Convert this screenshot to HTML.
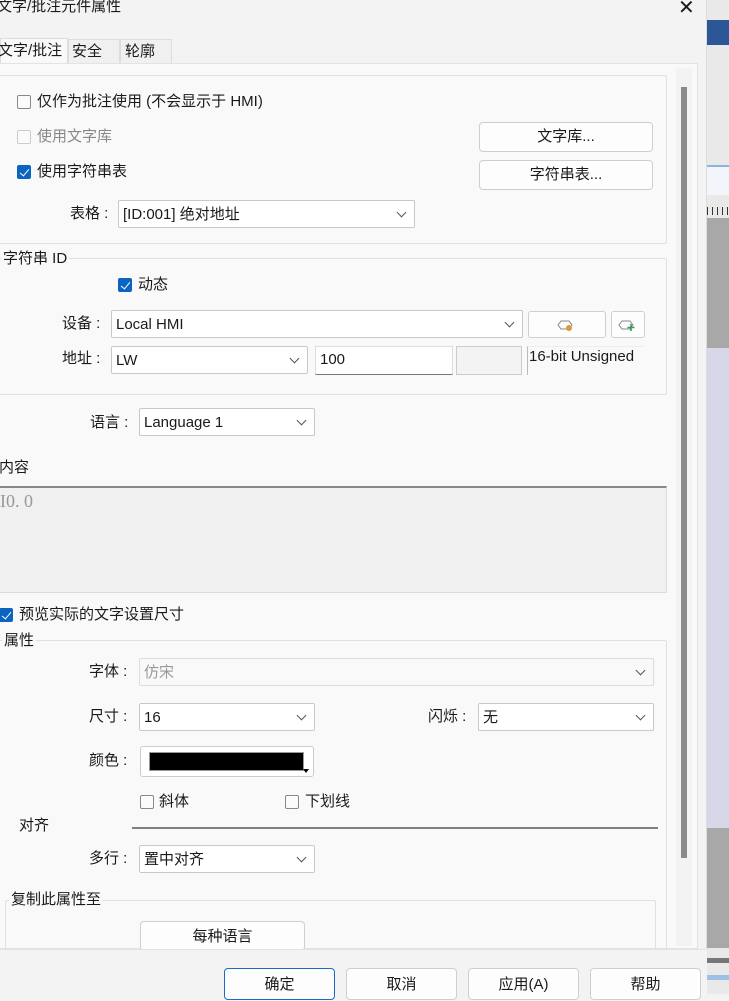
<!DOCTYPE html>
<html><head><meta charset="utf-8"><style>
*{box-sizing:border-box;margin:0;padding:0}
body{width:729px;height:994px;overflow:hidden;background:#f3f3f3;position:relative;font-family:"Liberation Sans","Noto Sans CJK SC",sans-serif;font-size:15px;color:#1a1a1a}
.a{position:absolute}
.t{position:absolute;white-space:nowrap;line-height:18px}
.sel{position:absolute;background:#fff;border:1px solid #c8c8c8;border-radius:2px;padding-left:4px;line-height:27px;font-size:15px}
.sel:after{content:"";position:absolute;right:9px;top:8px;width:6px;height:6px;border-right:1px solid #555;border-bottom:1px solid #555;transform:rotate(45deg)}
.btn{position:absolute;background:#fdfdfd;border:1px solid #cfcfcf;border-radius:4px;text-align:center;font-size:15px}
.cb{position:absolute;width:14px;height:14px;border:1px solid #888;border-radius:2px;background:#fbfbfb}
.cb.on{background:#0a64c0;border-color:#0a64c0}
.cb.on:after{content:"";position:absolute;left:4px;top:1px;width:4px;height:8px;border-right:1.5px solid #fff;border-bottom:1.5px solid #fff;transform:rotate(40deg)}
.grp{position:absolute;border:1px solid #e0e0e0;border-radius:2px}
.lbl{position:absolute;background:#f9f9f9;padding:0 2px;white-space:nowrap;line-height:18px}
</style></head><body>
<div class="a" style="left:707px;top:0;width:22px;height:994px;background:#e9e9e9"></div>
<div class="a" style="left:707px;top:20px;width:22px;height:25px;background:#2b5797"></div>
<div class="a" style="left:707px;top:165px;width:22px;height:2px;background:#8ab4e0"></div>
<div class="a" style="left:707px;top:167px;width:22px;height:28px;background:#f2f5fa"></div>
<div class="a" style="left:707px;top:207px;width:22px;height:8px;background:repeating-linear-gradient(90deg,#333 0 1px,transparent 1px 5px)"></div>
<div class="a" style="left:707px;top:218px;width:22px;height:130px;background:#a8a8a8"></div>
<div class="a" style="left:707px;top:348px;width:22px;height:480px;background:#d7d7ea"></div>
<div class="a" style="left:707px;top:828px;width:22px;height:120px;background:#a8a8a8"></div>
<div class="a" style="left:707px;top:958px;width:22px;height:5px;background:#777"></div>
<div class="a" style="left:707px;top:975px;width:22px;height:5px;background:#9cc0e8"></div>
<div class="a" style="left:0;top:0;width:707px;height:994px;background:#f3f3f3;border-right:1px solid #ddd"></div>
<div class="t" style="left:-3px;top:-2px;font-size:15px">文字/批注元件属性</div>
<div class="t" style="left:678px;top:-1px;font-size:20px;font-weight:300">✕</div>
<div class="a" style="left:0;top:38px;width:68px;height:26px;background:#f9f9f9;border:1px solid #ddd;border-bottom:none"></div>
<div class="a" style="left:68px;top:39px;width:52px;height:24px;background:#f0f0f0;border:1px solid #ddd;border-bottom:none"></div>
<div class="a" style="left:120px;top:39px;width:52px;height:24px;background:#f0f0f0;border:1px solid #ddd;border-bottom:none"></div>
<div class="t" style="left:-2px;top:42px">文字/批注</div>
<div class="t" style="left:72px;top:43px">安全</div>
<div class="t" style="left:125px;top:43px">轮廓</div>
<div class="a" style="left:0;top:63px;width:698px;height:886px;background:#f9f9f9;border:1px solid #e3e3e3;border-left:none"></div>
<div class="a" style="left:676px;top:68px;width:16px;height:878px;background:#f3f3f3"></div>
<div class="a" style="left:681px;top:87px;width:6px;height:771px;background:#8a8a8a"></div>
<div class="grp" style="left:-2px;top:75px;width:669px;height:169px"></div>
<div class="cb" style="left:17px;top:95px"></div><div class="t" style="left:37px;top:93px">仅作为批注使用 (不会显示于 HMI)</div>
<div class="cb" style="left:17px;top:130px;border-color:#ccc"></div><div class="t" style="left:37px;top:128px;color:#888">使用文字库</div>
<div class="cb on" style="left:17px;top:165px"></div><div class="t" style="left:37px;top:163px">使用字符串表</div>
<div class="btn" style="left:479px;top:122px;width:174px;height:30px;line-height:28px">文字库...</div>
<div class="btn" style="left:479px;top:160px;width:174px;height:30px;line-height:28px">字符串表...</div>
<div class="t" style="left:70px;top:205px">表格 :</div>
<div class="sel" style="left:118px;top:200px;width:297px;height:28px">[ID:001] 绝对地址</div>
<div class="grp" style="left:-2px;top:258px;width:669px;height:137px"></div>
<div class="lbl" style="left:1px;top:250px">字符串 ID</div>
<div class="cb on" style="left:118px;top:278px"></div><div class="t" style="left:138px;top:276px">动态</div>
<div class="t" style="left:62px;top:315px">设备 :</div>
<div class="sel" style="left:111px;top:310px;width:412px;height:28px">Local HMI</div>
<div class="btn" style="left:528px;top:311px;width:78px;height:27px;border-radius:3px"><svg width="20" height="14" viewBox="0 0 20 14" style="margin-top:6px"><path d="M4 3h8l3 4-3 4H4l-3-4z" fill="none" stroke="#888"/><circle cx="12" cy="10" r="3" fill="#d89a40"/></svg></div>
<div class="btn" style="left:611px;top:311px;width:34px;height:27px;border-radius:3px"><svg width="20" height="14" viewBox="0 0 20 14" style="margin-top:6px"><path d="M4 3h8l3 4-3 4H4l-3-4z" fill="none" stroke="#888"/><path d="M13 6v7M9.5 9.5h7" stroke="#3a9a5a" stroke-width="1.6"/></svg></div>
<div class="t" style="left:62px;top:350px">地址 :</div>
<div class="sel" style="left:111px;top:346px;width:197px;height:28px">LW</div>
<div class="a" style="left:315px;top:346px;width:138px;height:29px;background:#fff;border:1px solid #ddd;border-bottom:1px solid #777;padding-left:4px;line-height:25px;font-size:15px">100</div>
<div class="a" style="left:456px;top:346px;width:66px;height:29px;background:#f3f3f3;border:1px solid #ccc"></div>
<div class="a" style="left:527px;top:346px;width:117px;height:29px;background:#f9f9f9;border-left:1px solid #bbb;border-top:1px solid #eee;padding-left:1px;line-height:20px;font-size:15px">16-bit Unsigned</div>
<div class="t" style="left:90px;top:414px">语言 :</div>
<div class="sel" style="left:139px;top:408px;width:176px;height:28px">Language 1</div>
<div class="t" style="left:-1px;top:459px">内容</div>
<div class="a" style="left:0;top:486px;width:667px;height:107px;background:#f0f0f0;border-top:2px solid #888;border-right:1px solid #ddd;border-bottom:1px solid #ddd"></div>
<div class="t" style="left:0;top:492px;font-family:'Liberation Serif','Noto Serif CJK SC',serif;font-size:18px;color:#999">I0. 0</div>
<div class="cb on" style="left:-1px;top:608px"></div><div class="t" style="left:19px;top:606px">预览实际的文字设置尺寸</div>
<div class="grp" style="left:-2px;top:640px;width:669px;height:320px"></div>
<div class="lbl" style="left:2px;top:632px">属性</div>
<div class="t" style="left:89px;top:663px">字体 :</div>
<div class="sel" style="left:139px;top:658px;width:515px;height:28px;background:#f9f9f9;color:#999;border-color:#ddd">仿宋</div>
<div class="t" style="left:89px;top:708px">尺寸 :</div>
<div class="sel" style="left:139px;top:703px;width:176px;height:28px">16</div>
<div class="t" style="left:428px;top:708px">闪烁 :</div>
<div class="sel" style="left:478px;top:703px;width:176px;height:28px">无</div>
<div class="t" style="left:89px;top:752px">颜色 :</div>
<div class="a" style="left:140px;top:746px;width:174px;height:31px;background:#fff;border:1px solid #ccc;border-radius:3px"></div>
<div class="a" style="left:149px;top:752px;width:155px;height:19px;background:#000;border:1px solid #999"></div>
<div class="a" style="left:303px;top:769px;border-left:3px solid transparent;border-right:3px solid transparent;border-top:4px solid #000"></div>
<div class="cb" style="left:140px;top:795px"></div><div class="t" style="left:159px;top:793px">斜体</div>
<div class="cb" style="left:285px;top:795px"></div><div class="t" style="left:305px;top:793px">下划线</div>
<div class="t" style="left:19px;top:817px">对齐</div>
<div class="a" style="left:132px;top:827px;width:526px;height:2px;background:#808080"></div>
<div class="t" style="left:89px;top:850px">多行 :</div>
<div class="sel" style="left:139px;top:845px;width:176px;height:28px">置中对齐</div>
<div class="grp" style="left:5px;top:900px;width:651px;height:60px"></div>
<div class="lbl" style="left:9px;top:891px">复制此属性至</div>
<div class="btn" style="left:140px;top:921px;width:165px;height:30px;line-height:30px">每种语言</div>
<div class="a" style="left:0;top:949px;width:707px;height:45px;background:#f3f3f3;border-top:1px solid #e3e3e3"></div>
<div class="btn" style="left:224px;top:968px;width:111px;height:32px;line-height:32px;border:1.5px solid #1c6ac8">确定</div>
<div class="btn" style="left:346px;top:968px;width:111px;height:32px;line-height:32px">取消</div>
<div class="btn" style="left:468px;top:968px;width:111px;height:32px;line-height:32px">应用(A)</div>
<div class="btn" style="left:590px;top:968px;width:111px;height:32px;line-height:32px">帮助</div>
</body></html>
